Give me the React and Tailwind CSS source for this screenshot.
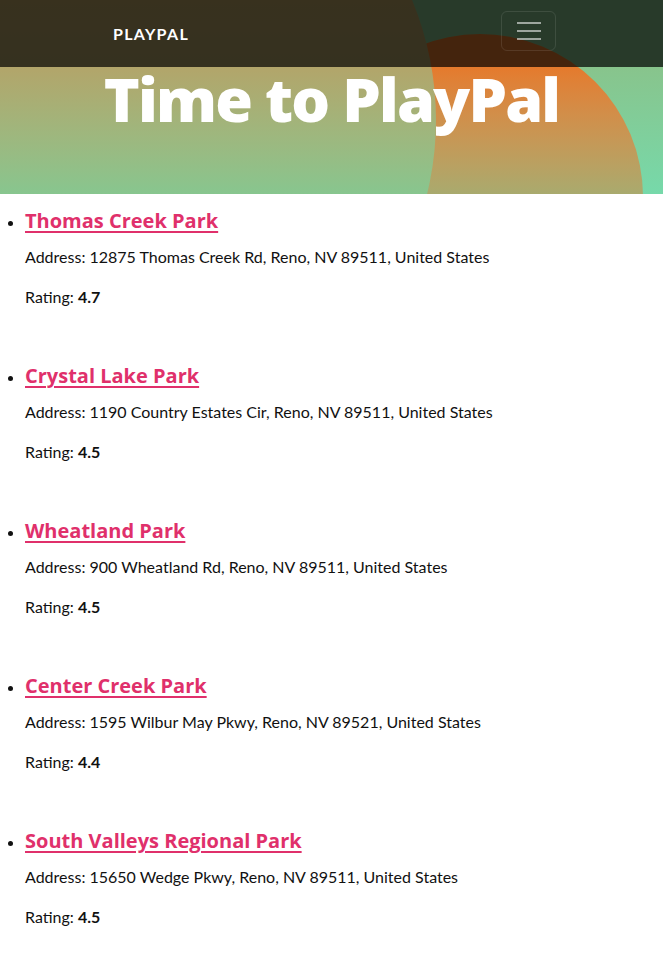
import React from 'react';

const parks = [
  { name: 'Thomas Creek Park', address: '12875 Thomas Creek Rd, Reno, NV 89511, United States', rating: '4.7' },
  { name: 'Crystal Lake Park', address: '1190 Country Estates Cir, Reno, NV 89511, United States', rating: '4.5' },
  { name: 'Wheatland Park', address: '900 Wheatland Rd, Reno, NV 89511, United States', rating: '4.5' },
  { name: 'Center Creek Park', address: '1595 Wilbur May Pkwy, Reno, NV 89521, United States', rating: '4.4' },
  { name: 'South Valleys Regional Park', address: '15650 Wedge Pkwy, Reno, NV 89511, United States', rating: '4.5' },
];

const Hero = () => (
  <header className="relative h-[194px] overflow-hidden bg-linear-to-b from-[#88c48c] from-[34%] to-[#76d9aa]">
    {/* decorative circles */}
    <div className="absolute left-[317px] top-[34px] w-[326px] h-[326px] rounded-full bg-linear-to-b from-[#e57a2c] from-[10%] to-[#a9aa6e] to-[49%]" />
    <div className="absolute left-[-188px] top-[-192px] w-[624px] h-[624px] rounded-full bg-linear-to-b from-[#bba467] from-[31%] via-[#b2a56a] via-[41.5%] to-[#87c68f] to-[62%]" />

    <nav className="relative z-10 h-[67px] bg-black/70 flex items-start justify-between pl-[113px] pr-[107px]">
      <span className="self-center text-white font-bold text-[16px] tracking-[0.08em]">PLAYPAL</span>
      <button className="mt-[11px] w-[55px] h-[40px] border border-white/10 rounded-md flex flex-col items-center justify-center gap-[6px]">
        <span className="block w-6 h-[2px] bg-white/55" />
        <span className="block w-6 h-[2px] bg-white/55" />
        <span className="block w-6 h-[2px] bg-white/55" />
      </button>
    </nav>

    <h1 className="relative z-10 mt-px text-center text-white font-['Open_Sans',sans-serif] font-extrabold text-[61px] leading-none tracking-[-0.03em]">
      Time to PlayPal
    </h1>
  </header>
);

export default function App() {
  return (
    <div className="min-h-[959px] bg-white text-[#111] font-['Lato','Noto_Sans',sans-serif]">
      <Hero />
      <ul className="list-disc pl-[25px] pt-[15px] text-[16px]">
        {parks.map((park) => (
          <li key={park.name} className="mb-[55px]">
            <h2 className="text-[20px] leading-[24px] font-bold font-['Open_Sans',sans-serif]">
              <a href="#" className="text-[#e0306b] underline underline-offset-[3px] decoration-2">
                {park.name}
              </a>
            </h2>
            <p className="mt-[12px] leading-[24px]">Address: {park.address}</p>
            <p className="mt-[16px] leading-[24px]">
              Rating: <strong className="font-bold">{park.rating}</strong>
            </p>
          </li>
        ))}
      </ul>
    </div>
  );
}
